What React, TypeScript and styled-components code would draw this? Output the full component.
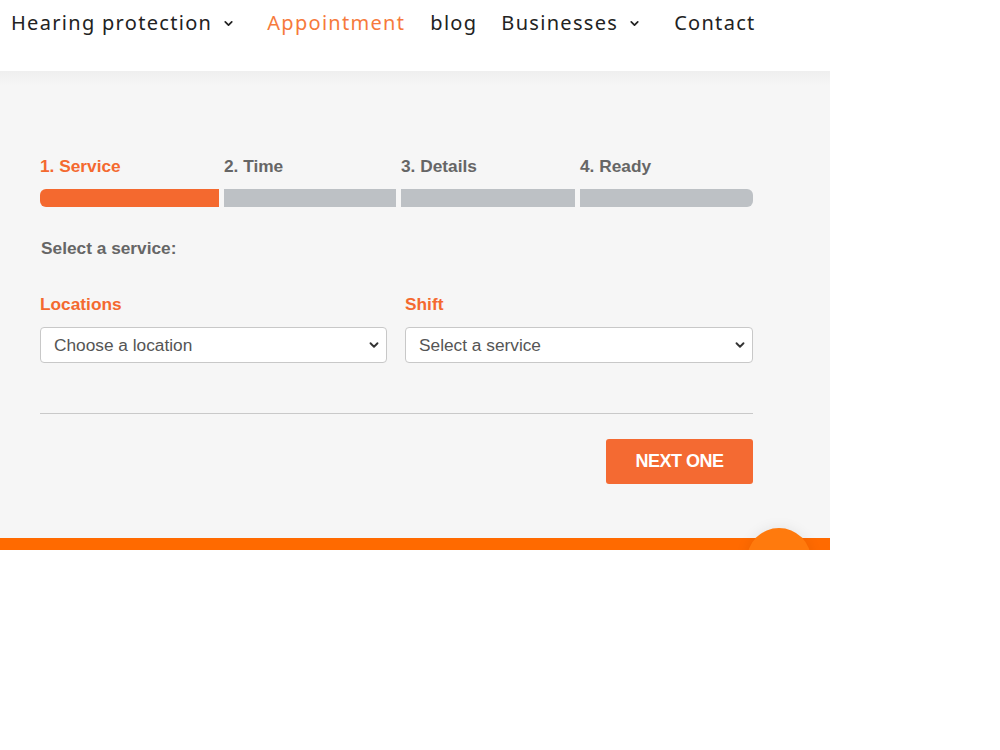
import React from "react";
import styled, { createGlobalStyle } from "styled-components";
import { ChevronDown } from "lucide-react";

const Global = createGlobalStyle`
  html, body { margin: 0; padding: 0; background: #ffffff; }
  * { box-sizing: border-box; }
`;

const Page = styled.div`
  width: 830px;
  height: 550px;
  position: relative;
  overflow: hidden;
  display: flex;
  flex-direction: column;
`;

const Nav = styled.nav`
  height: 71px;
  display: flex;
  align-items: flex-start;
  padding: 9px 0 0 11px;
  background: #ffffff;
`;

const NavItem = styled.a<{ $active?: boolean; $gap: number }>`
  display: inline-flex;
  align-items: center;
  gap: 10px;
  margin-right: ${(p) => p.$gap}px;
  font-family: "Noto Sans", sans-serif;
  font-size: 20px;
  letter-spacing: 1.3px;
  color: ${(p) => (p.$active ? "#f67a3c" : "#222222")};
  text-decoration: none;
  line-height: 28px;
`;

const Panel = styled.main`
  flex: 1;
  background: linear-gradient(#efefef 0px, #f6f6f6 14px, #f6f6f6 100%);
  padding: 86px 0 0 40px;
  font-family: "Liberation Sans", Arial, sans-serif;
`;

const Form = styled.div`
  width: 713px;
  display: flex;
  flex-direction: column;
`;

const Steps = styled.div`
  display: grid;
  grid-template-columns: 179px 172px 174px 173px;
  column-gap: 5px;
  row-gap: 14px;
`;

const StepLabel = styled.div<{ $active?: boolean }>`
  font-size: 17.3px;
  font-weight: 700;
  line-height: 18px;
  color: ${(p) => (p.$active ? "#f4692f" : "#666666")};
`;

const StepBar = styled.div<{ $active?: boolean; $first?: boolean; $last?: boolean }>`
  height: 18px;
  background: ${(p) => (p.$active ? "#f4692f" : "#bdc1c5")};
  border-radius: ${(p) => (p.$first ? "6px 0 0 6px" : p.$last ? "0 6px 6px 0" : "0")};
`;

const Prompt = styled.div`
  margin-top: 32px;
  margin-left: 1px;
  font-size: 17.3px;
  font-weight: 700;
  color: #666666;
  line-height: 18px;
`;

const Fields = styled.div`
  margin-top: 38px;
  display: grid;
  grid-template-columns: 347px 348px;
  column-gap: 18px;
`;

const Field = styled.label`
  display: flex;
  flex-direction: column;
  gap: 14px;
`;

const FieldLabel = styled.span`
  font-size: 17.3px;
  font-weight: 700;
  color: #f4692f;
  line-height: 18px;
`;

const SelectWrap = styled.div`
  position: relative;
  height: 36px;
`;

const Select = styled.select`
  appearance: none;
  -webkit-appearance: none;
  height: 36px;
  width: 100%;
  border: 1px solid #c8c8c8;
  border-radius: 4px;
  background: #ffffff;
  padding: 0 30px 0 13px;
  font-family: "Liberation Sans", Arial, sans-serif;
  font-size: 17.3px;
  color: #555555;
`;

const SelectArrow = styled(ChevronDown)`
  position: absolute;
  right: 6px;
  top: 11px;
  pointer-events: none;
`;

const Divider = styled.hr`
  margin: 50px 0 0 0;
  border: none;
  border-top: 1px solid #c9c9c9;
  width: 100%;
`;

const Actions = styled.div`
  display: flex;
  justify-content: flex-end;
  margin-top: 25px;
`;

const NextButton = styled.button`
  width: 147px;
  height: 45px;
  border: none;
  border-radius: 3px;
  background: #f46a32;
  color: #ffffff;
  font-family: "Liberation Sans", Arial, sans-serif;
  font-size: 18px;
  font-weight: 700;
  letter-spacing: -0.5px;
  text-transform: uppercase;
`;

const FooterBar = styled.div`
  height: 12px;
  background: #ff6a00;
`;

const FloatButton = styled.div`
  position: absolute;
  left: 747px;
  top: 528px;
  width: 64px;
  height: 64px;
  border-radius: 50%;
  background: #ff7a0d;
  box-shadow: 0 0 14px rgba(0, 0, 0, 0.08);
`;

const navItems = [
  { label: "Hearing protection", chevron: true, gap: 32 },
  { label: "Appointment", active: true, gap: 25 },
  { label: "blog", gap: 24 },
  { label: "Businesses", chevron: true, gap: 33 },
  { label: "Contact", gap: 0 },
];

const steps = ["1. Service", "2. Time", "3. Details", "4. Ready"];

function Dropdown({ placeholder }: { placeholder: string }) {
  return (
    <SelectWrap>
      <Select defaultValue="">
        <option value="">{placeholder}</option>
      </Select>
      <SelectArrow size={14} strokeWidth={3.2} color="#333" />
    </SelectWrap>
  );
}

export default function App() {
  return (
    <>
      <Global />
      <Page>
        <Nav>
          {navItems.map((n) => (
            <NavItem key={n.label} $active={n.active} $gap={n.gap} href="#">
              {n.label}
              {n.chevron && <ChevronDown size={13} strokeWidth={3.2} color="#222" />}
            </NavItem>
          ))}
        </Nav>
        <Panel>
          <Form>
            <Steps>
              {steps.map((s, i) => (
                <StepLabel key={s} $active={i === 0}>
                  {s}
                </StepLabel>
              ))}
              {steps.map((s, i) => (
                <StepBar key={s} $active={i === 0} $first={i === 0} $last={i === steps.length - 1} />
              ))}
            </Steps>
            <Prompt>Select a service:</Prompt>
            <Fields>
              <Field>
                <FieldLabel>Locations</FieldLabel>
                <Dropdown placeholder="Choose a location" />
              </Field>
              <Field>
                <FieldLabel>Shift</FieldLabel>
                <Dropdown placeholder="Select a service" />
              </Field>
            </Fields>
            <Divider />
            <Actions>
              <NextButton>Next one</NextButton>
            </Actions>
          </Form>
        </Panel>
        <FooterBar />
        <FloatButton />
      </Page>
    </>
  );
}
